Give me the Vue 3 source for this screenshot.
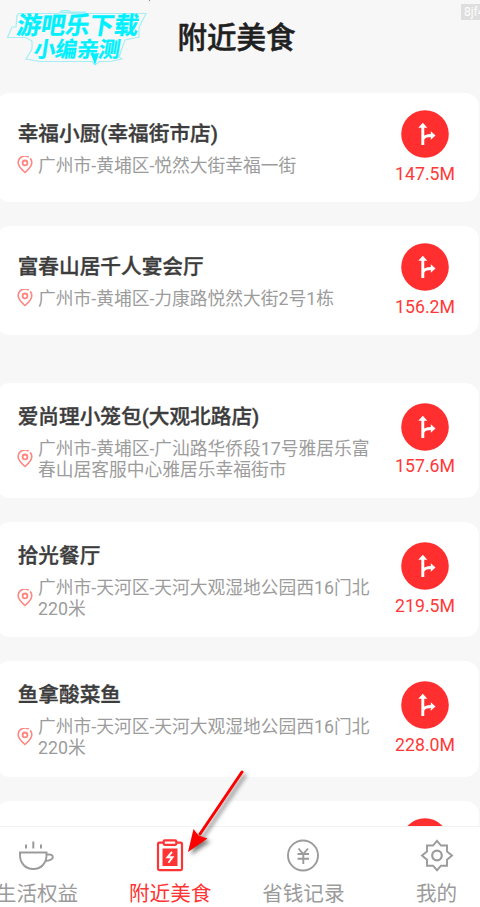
<script setup>
const places = [
  { name: '幸福小厨(幸福街市店)', lines: ['广州市-黄埔区-悦然大街幸福一街'], distance: '147.5M', kind: 'single' },
  { name: '富春山居千人宴会厅', lines: ['广州市-黄埔区-力康路悦然大街2号1栋'], distance: '156.2M', kind: 'single spaced' },
  { name: '爱尚理小笼包(大观北路店)', lines: ['广州市-黄埔区-广汕路华侨段17号雅居乐富', '春山居客服中心雅居乐幸福街市'], distance: '157.6M', kind: 'double' },
  { name: '拾光餐厅', lines: ['广州市-天河区-天河大观湿地公园西16门北', '220米'], distance: '219.5M', kind: 'double' },
  { name: '鱼拿酸菜鱼', lines: ['广州市-天河区-天河大观湿地公园西16门北', '220米'], distance: '228.0M', kind: 'double' },
  { name: '', lines: [], distance: '', kind: 'double partial' },
]
const tabs = [
  { id: 'cup', label: '生活权益' },
  { id: 'food', label: '附近美食' },
  { id: 'money', label: '省钱记录' },
  { id: 'gear', label: '我的' },
]
</script>

<template>
  <div class="screen">
    <header class="header">
      <h1>附近美食</h1>
      <div class="stamp">
        <svg width="160" height="75" viewBox="0 0 160 75" fill="none" stroke="#a5eef5" stroke-width="1.200">
          <path d="M17 15.500L19 13.500H59L62 10.500H69L72 13.500H146L139 27.500V37L125 40L119 57L122 59L110 61.500H99L95 65L92 61.500H40L26 59L32 49V41L26 37.500H7.500L12 27H16Z" />
          <path d="M61 12.500H86" stroke-width="2" />
          <path d="M91 54L99 53L95 65Z" fill="#00f0ff" stroke="none" />
        </svg>
        <span class="stamp-line first">游吧乐下载</span>
        <span class="stamp-line second">小编亲测</span>
      </div>
      <span class="code">8jf4</span>
      <i class="speck"></i>
    </header>

    <main class="list">
      <article v-for="(p, i) in places" :key="i" class="card" :class="p.kind">
        <div class="info">
          <h2>{{ p.name }}</h2>
          <div v-if="p.lines.length" class="address">
            <svg class="pin" width="16" height="20" viewBox="0 0 16 20" fill="none" stroke="#ff8580" stroke-width="1.600">
              <path d="M11.700 1.200A6.700 6.700 0 0 0 1.200 6.700C1.200 10.300 4.300 13.300 8 16.500C11.700 13.300 14.800 10.300 14.800 6.700C14.800 5 14.200 3.500 13.200 2.400" />
              <circle cx="8" cy="6.900" r="2.400" stroke-width="1.800" />
            </svg>
            <p><span v-for="line in p.lines" :key="line">{{ line }}</span></p>
          </div>
        </div>
        <div class="route">
          <svg width="48" height="48" viewBox="0 0 48 48">
            <circle cx="24" cy="24" r="23.800" fill="#ff2f2f" />
            <path d="M21.800 35V16M22.300 29C23 26 25.500 25.500 30.500 25.500" fill="none" stroke="#fff" stroke-width="2.900" />
            <path d="M17.300 17.800L21.800 12.800L26.300 17.800ZM29.800 21.200L34.500 25.500L29.800 29.800Z" fill="#fff" />
          </svg>
          <span>{{ p.distance }}</span>
        </div>
      </article>
    </main>

    <nav class="tabs">
      <div v-for="t in tabs" :key="t.id" class="tab" :class="{ active: t.id === 'food' }">
        <svg width="36" height="36" viewBox="0 0 36 36" fill="none" stroke="currentColor" stroke-width="1.900">
          <template v-if="t.id === 'cup'">
            <path d="M1 14.500H27.500V17C27.500 25 22.500 31 14.300 31S1 25 1 17ZM27.500 16.500H30C34.500 16.500 35 20 31.500 21.800C30 22.700 28.500 23 26.200 23" />
            <path d="M7 6.500V10.500M14.300 3.500V10.500M22 6.500V10.500" stroke-width="2" />
          </template>
          <template v-else-if="t.id === 'food'">
            <path d="M11.500 4.700H7.300Q6 4.700 6 6V30.800Q6 32.100 7.300 32.100H28.700Q30 32.100 30 30.800V6Q30 4.700 28.700 4.700H24.500" stroke-width="2.200" />
            <rect x="11.700" y="2.300" width="12.600" height="4.500" rx="1" stroke-width="2.200" />
            <rect x="10.500" y="10.500" width="15" height="17.500" fill="currentColor" stroke="none" />
            <path d="M20 13.800L15.500 19.300H20.500L16.500 24.800" stroke="#fff" stroke-width="1.900" />
          </template>
          <template v-else-if="t.id === 'money'">
            <circle cx="18" cy="17.500" r="15" />
            <path d="M13.500 10.500L18.300 16L23 10.500M12.500 16H24M12.500 20.800H24M18.300 16V26" />
          </template>
          <template v-else>
            <path d="M18 2.800L22 7.500H28V13.500L33 17.500L28 21.700V27.700H22L18 32.200L14 27.700H8V21.700L3 17.500L8 13.500V7.500H14Z" />
            <circle cx="18" cy="17.500" r="4.800" stroke-width="2.200" />
          </template>
        </svg>
        <span>{{ t.label }}</span>
      </div>
    </nav>

    <svg class="pointer" width="70" height="100" viewBox="0 0 70 100">
      <path d="M58 12L16 74" fill="none" stroke="#f00" stroke-width="3" stroke-linecap="round" />
      <path d="M4 92L9.500 69L14.500 75.500L23.500 78.500Z" fill="#f00" />
    </svg>
  </div>
</template>

<style>
body { overflow: hidden; }
</style>

<style scoped>
.screen { position: relative; display: flex; flex-direction: column; width: 480px; height: 907px; overflow: hidden; background: #f7f7f7; font-family: Roboto, "Noto Sans CJK SC", sans-serif; }
.header { position: relative; flex: none; height: 93px; }
h1 { margin: 0; padding: 16px 0 0 177.500px; font-size: 29.500px; line-height: 44px; font-weight: 500; color: #202020; -webkit-text-stroke: .5px #202020; }
.stamp { position: absolute; left: 0; top: 0; width: 160px; height: 75px; }
.stamp svg { display: block; }
.stamp-line { position: absolute; color: #00f0ff; font-weight: 700; white-space: nowrap; transform: skewX(-9deg); line-height: 28px; -webkit-text-stroke: .3px #00f0ff; }
.first { left: 17px; top: 12px; font-size: 24.300px; }
.second { left: 34px; top: 36px; font-size: 21.500px; }
.code { position: absolute; left: 461px; top: 4px; padding-left: 3px; width: 20px; height: 16px; background: #dedede; color: #fff; font-size: 12px; line-height: 17px; }
.speck { position: absolute; left: 149px; top: 0; width: 1px; height: 1px; background: #888; }
.list { flex: 1; min-height: 0; overflow: hidden; display: flex; flex-direction: column; gap: 24px; }
.card { flex: none; display: flex; justify-content: space-between; box-sizing: border-box; width: 483px; margin-left: -4px; padding: 0 24px 0 21.700px; background: #fff; border-radius: 14px; }
.single { height: 109.200px; padding-top: 17px; }
.double { height: 115.200px; padding-top: 20px; }
.partial { padding-top: 17.500px; }
.spaced { margin-bottom: 23.600px; }
.info { padding-top: 9px; }
.double .info { padding-top: 0; margin-top: -1px; }
h2 { margin: 0; font-size: 20.660px; line-height: 30px; font-weight: 500; color: #3c3c3c; white-space: nowrap; -webkit-text-stroke: .35px #3c3c3c; }
.address { display: flex; align-items: center; gap: 5px; margin-left: -.700px; padding-top: 6.500px; }
.double .address { padding-top: 7px; }
.pin { flex: none; }
p { margin: 0; font-size: 17.760px; line-height: 20.600px; color: #9c9c9c; white-space: nowrap; }
p span { display: block; }
.route { display: flex; flex-direction: column; align-items: center; width: 60px; color: #ff3838; font-size: 17.700px; line-height: 22px; gap: 4.500px; }
.route svg { display: block; flex: none; }
.tabs { position: relative; flex: none; display: grid; grid-template-columns: repeat(4, 133.200px); height: 81px; margin-left: -29.600px; box-sizing: border-box; width: 533px; border-top: 1px solid #f2f2f2; background: #fff; }
.tab { display: flex; flex-direction: column; align-items: center; padding-top: 10.500px; color: #9b9b9b; font-size: 20.600px; line-height: 30px; gap: 5.500px; white-space: nowrap; }
.tab svg { display: block; }
.active { color: #ff3434; }
.pointer { position: absolute; left: 184px; top: 760px; filter: drop-shadow(3px 3px 2px rgba(0, 0, 0, .5)); }
</style>
